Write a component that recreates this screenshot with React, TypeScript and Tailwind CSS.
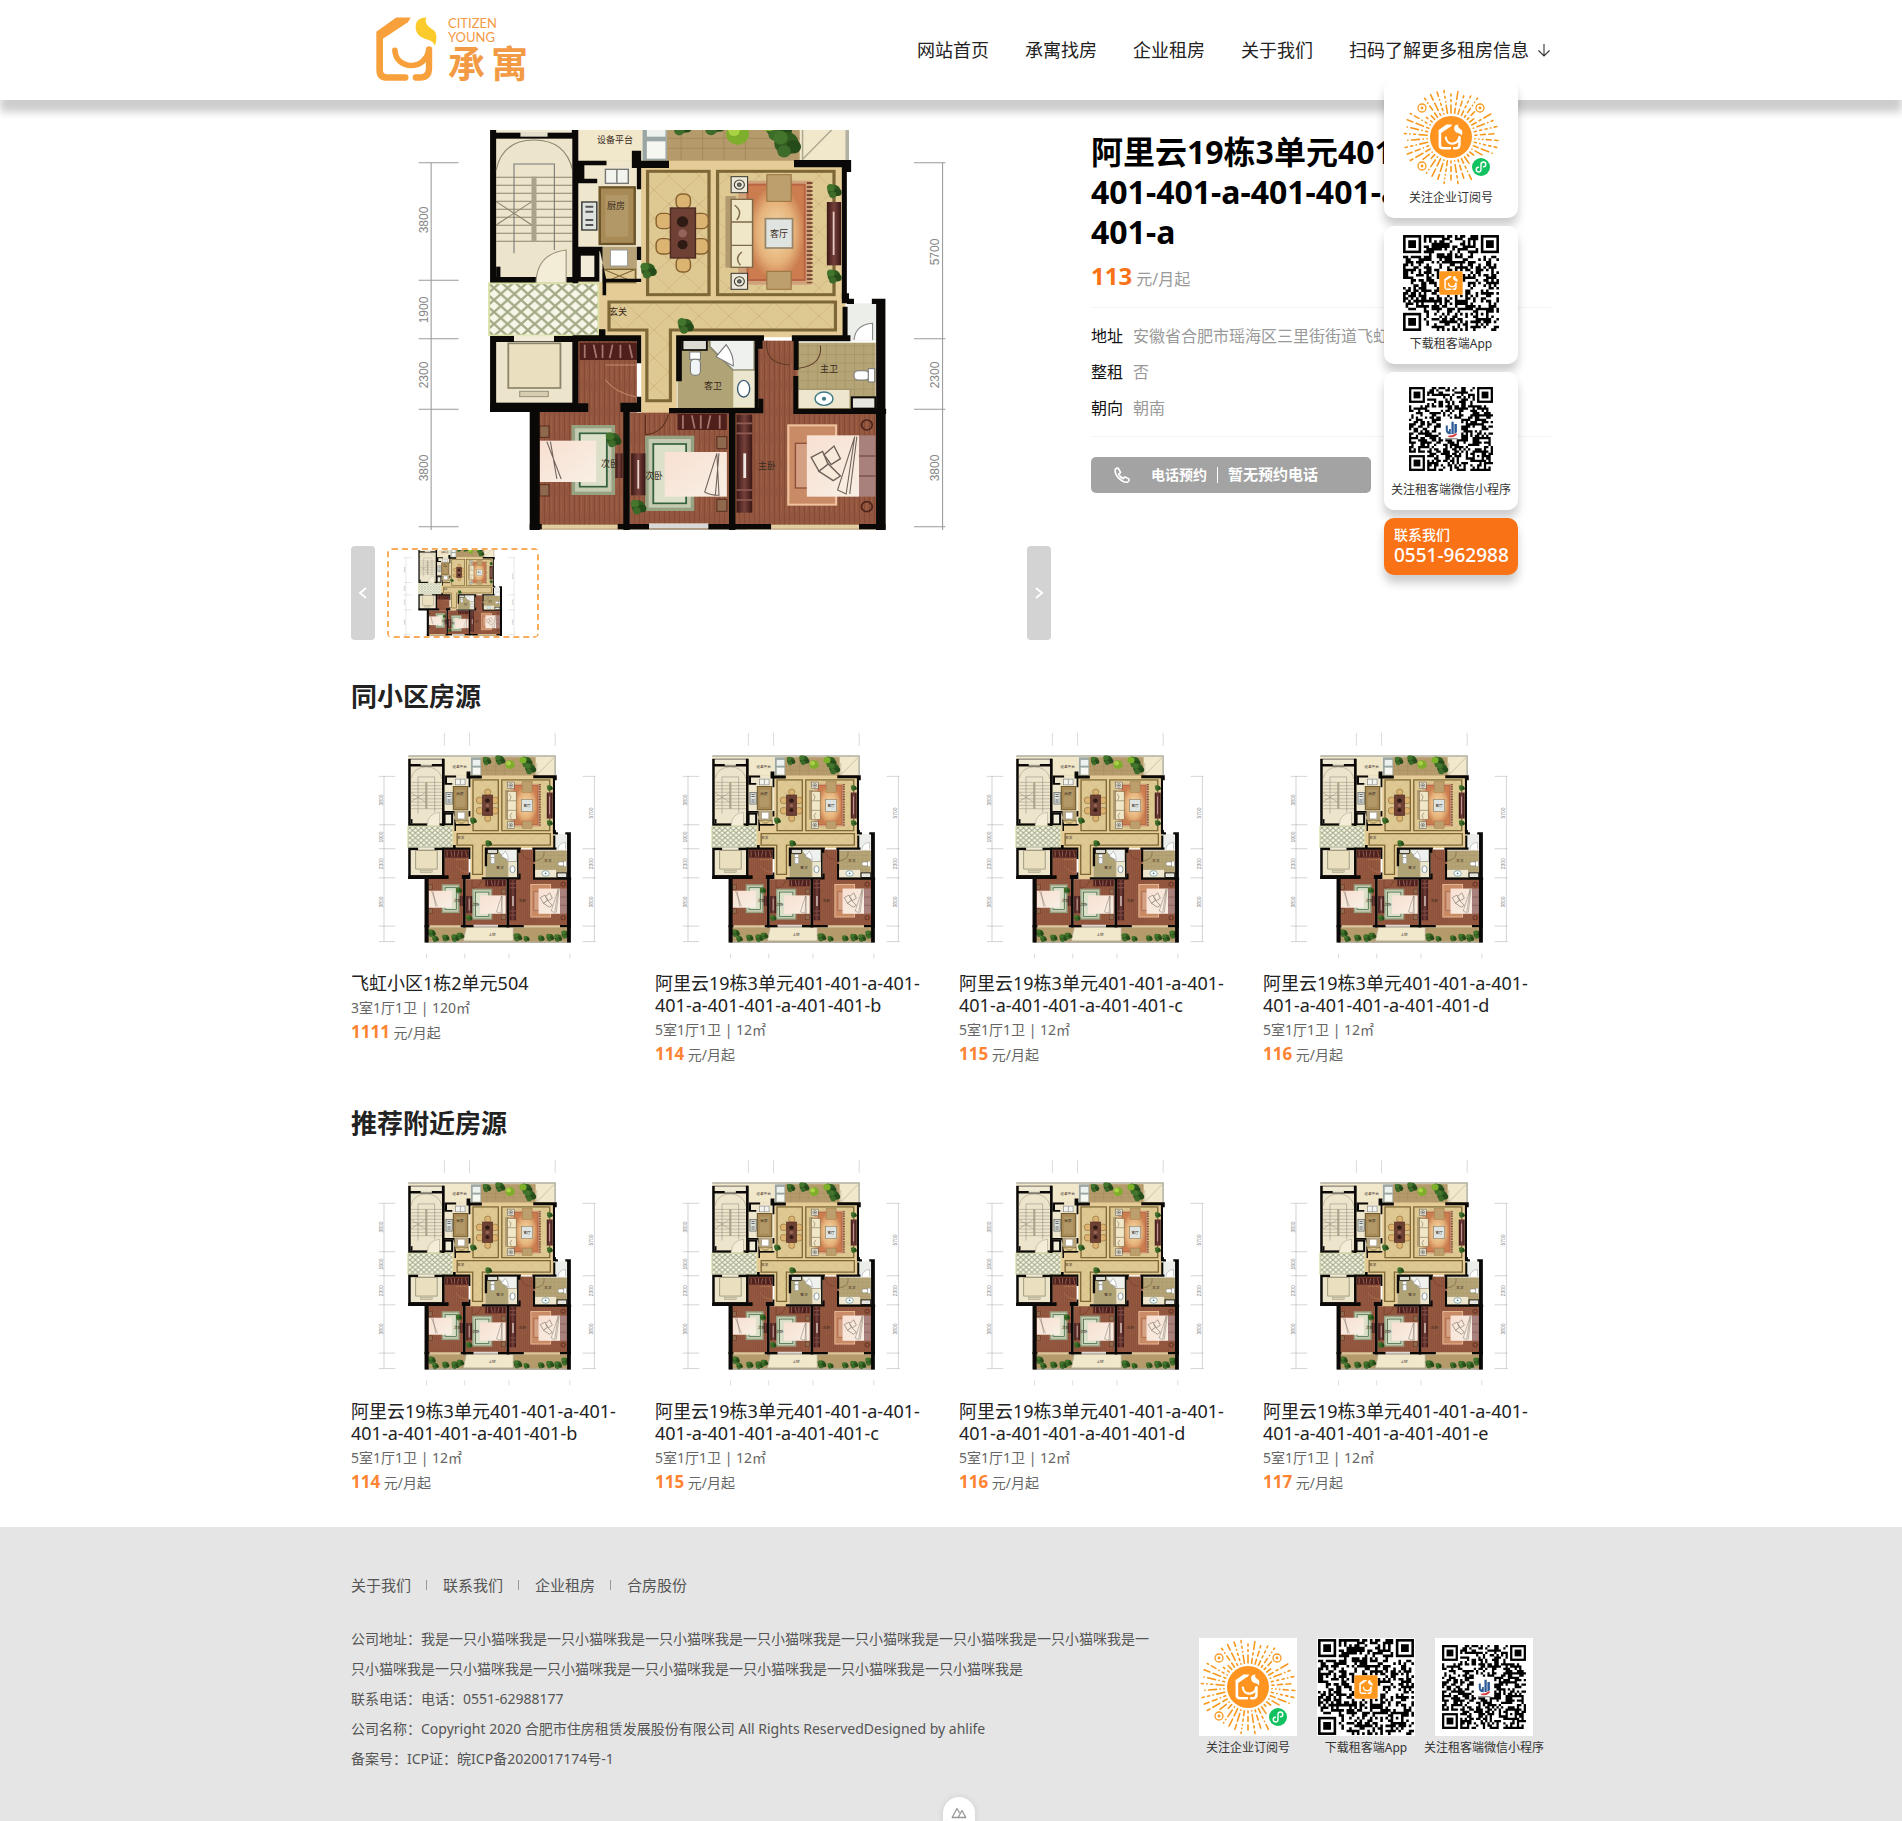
import React from "react";

const FONT =
  "font-['Noto_Sans','Noto_Sans_CJK_SC',sans-serif]";

/* ---------- brand mark ---------- */

function MarkPaths({ main, leaf }: { main: string; leaf: string }) {
  return (
    <>
      <g fill="none" stroke={main} strokeLinecap="round" strokeLinejoin="round">
        <path d="M122 104V212Q122 235 146 235H199" strokeWidth="20" />
        <path d="M168 153C172 214 260 214 270 153" strokeWidth="17" />
        <path d="M271 150V206Q271 235 243 235H231" strokeWidth="19" />
      </g>
      <path d="M111 98L172 54H216L207 68L132 118Z" fill={main} />
      <path
        d="M232 72C236 58 250 54 263 53C254 74 274 84 287 94C297 108 293 124 289 139C281 120 262 122 246 112C232 102 228 86 232 72Z"
        fill={leaf}
      />
    </>
  );
}

function Logo() {
  return (
    <a href="#" aria-label="承寓 Citizen Young" className="ml-6 flex items-start gap-2.5">
      <svg viewBox="108 50 190 198" className="h-[66px] w-[63px]" aria-hidden="true">
        <MarkPaths main="#f7a03c" leaf="#fbcb2c" />
      </svg>
      <span className="flex flex-col text-[#f39a44]">
        <span className="font-['Lato',sans-serif] text-[13px] leading-[14px]">
          CITIZEN
          <br />
          YOUNG
        </span>
        <span className="flex gap-1.5 text-[37px] leading-10 font-bold">
          <span>承</span>
          <span>寓</span>
        </span>
      </span>
    </a>
  );
}

/* ---------- codes ---------- */

function hash(x: number, y: number, seed: number) {
  let h = (x * 374761393 + y * 668265263 + seed * 1274126177) | 0;
  h = Math.imul(h ^ (h >>> 13), 1274126177);
  h ^= h >>> 16;
  return (h >>> 0) / 4294967296;
}

const N = 37;

function qrPath(seed: number) {
  let d = "";
  for (let y = 0; y < N; y++) {
    for (let x = 0; x < N; x++) {
      const inFinder = (x < 8 && y < 8) || (x > N - 9 && y < 8) || (x < 8 && y > N - 9);
      const inCentre = Math.abs(x - 18) < 5 && Math.abs(y - 18) < 5;
      if (inFinder || inCentre) continue;
      const ax = Math.max(Math.abs(x - 30), Math.abs(y - 30));
      const on = ax <= 2 ? ax !== 1 : hash(x, y, seed) > 0.48;
      if (on) d += `M${x} ${y}h1v1h-1z`;
    }
  }
  return d;
}

const QR_APP = qrPath(3);
const QR_MINI = qrPath(11);

function Finder({ x, y }: { x: number; y: number }) {
  return (
    <>
      <rect x={x + 0.5} y={y + 0.5} width="6" height="6" fill="none" stroke="#000" strokeWidth="1" />
      <rect x={x + 2} y={y + 2} width="3" height="3" />
    </>
  );
}

function QrBody({ d }: { d: string }) {
  return (
    <>
      <path d={d} />
      <Finder x={0} y={0} />
      <Finder x={30} y={0} />
      <Finder x={0} y={30} />
    </>
  );
}

function AppCode() {
  return (
    <svg viewBox="-0.4 -0.4 37.8 37.8" className="size-[98px] bg-white" role="img" aria-label="下载租客端App">
      <QrBody d={QR_APP} />
      <rect x="14" y="14" width="9" height="9" rx="0.6" fill="#ff981e" />
      <svg x="15.7" y="15.7" width="5.6" height="5.6" viewBox="108 50 190 198">
        <MarkPaths main="#fff" leaf="#fff" />
      </svg>
    </svg>
  );
}

function MiniCode() {
  return (
    <svg viewBox="-3.1 -3.1 43.2 43.2" className="size-[98px] bg-white" role="img" aria-label="关注租客端微信小程序">
      <QrBody d={QR_MINI} />
      <path
        d="M16.2 17v1.8q0 2 2.2 2V18.5h-.8v1h-.5V17zM18.7 15.3h1v5.4h-1zM20 16.3h1.1v3.6l-1.1 .7z"
        fill="#2b5a96"
      />
      <path d="M17 21.5q2.4 .1 3.8-1.2l.4 .6q-1.4 1.5-3.6 1.2z" fill="#d8413c" />
      <path d="M15.8 22.8h5.6" stroke="#888" strokeWidth=".5" />
    </svg>
  );
}

const RAY_COUNT = 42;
const RAYS = Array.from({ length: RAY_COUNT }, (_, i) => {
  const a = ((i + 0.5) / RAY_COUNT) * Math.PI * 2;
  const segs: string[] = [];
  const isMarker = (x: number, y: number) =>
    Math.hypot(x - 20, y - 20) < 6.5 ||
    Math.hypot(x - 78, y - 20) < 6.5 ||
    Math.hypot(x - 20, y - 78) < 6.5 ||
    Math.hypot(x - 79, y - 79) < 11.5;
  let r = 24;
  let k = 0;
  while (r < 46) {
    const len = [0.3, 2, 5, 8][Math.floor(hash(i, k, 5) * 4)];
    const e = Math.min(r + len, 47);
    const p = [r, e].map((q) => [49 + Math.cos(a) * q, 49 + Math.sin(a) * q]);
    if (!isMarker(p[0][0], p[0][1]) && !isMarker(p[1][0], p[1][1]))
      segs.push(`M${p[0][0].toFixed(1)} ${p[0][1].toFixed(1)}L${p[1][0].toFixed(1)} ${p[1][1].toFixed(1)}`);
    r = e + 3.5;
    k++;
  }
  return segs.join("");
}).join("");

function SunCode() {
  return (
    <svg viewBox="0 0 98 98" className="size-[98px] bg-white" role="img" aria-label="关注企业订阅号">
      <path d={RAYS} stroke="#f7991f" strokeWidth="1.6" strokeLinecap="round" />
      {[
        [20, 20],
        [78, 20],
        [20, 78],
      ].map(([x, y]) => (
        <g key={`${x}-${y}`}>
          <circle cx={x} cy={y} r="4" fill="none" stroke="#f7991f" strokeWidth="1.3" />
          <circle cx={x} cy={y} r="1.4" fill="#f7991f" />
        </g>
      ))}
      <circle cx="49" cy="49" r="21" fill="#ff9520" />
      <svg x="36" y="36" width="25" height="26" viewBox="108 50 190 198">
        <MarkPaths main="#fff" leaf="#fff" />
      </svg>
      <circle cx="79" cy="79" r="9" fill="#12c15f" />
      <path
        d="M76.5 79.2a2.4 2.4 0 1 0 2.5 2.6v-5.6a2.4 2.4 0 1 1 2.5 2.6"
        fill="none"
        stroke="#fff"
        strokeWidth="1.4"
        strokeLinecap="round"
      />
    </svg>
  );
}

const CODES = [
  { label: "关注企业订阅号", Code: SunCode },
  { label: "下载租客端App", Code: AppCode },
  { label: "关注租客端微信小程序", Code: MiniCode },
];

/* ---------- floor plan ---------- */

const WALL = "#0b0907";
const WOOD = "url(#fp-wood)";

function Bush({ x, y, r = 22 }: { x: number; y: number; r?: number }) {
  return (
    <g>
      <circle cx={x} cy={y} r={r} fill="#2f5a20" />
      <circle cx={x - r * 0.5} cy={y - r * 0.5} r={r * 0.6} fill="#44752c" />
      <circle cx={x + r * 0.6} cy={y + r * 0.3} r={r * 0.6} fill="#264b1a" />
      <circle cx={x - r * 0.2} cy={y + r * 0.7} r={r * 0.55} fill="#3d6b29" />
    </g>
  );
}

function Tick({ x, ys }: { x: number; ys: number[] }) {
  return (
    <g stroke="#9a9a9a" strokeWidth="3" fill="none">
      <path d={`M${x} ${ys[0]}V${ys[ys.length - 1]}`} />
      {ys.map((y) => (
        <path key={y} d={x < 500 ? `M${x - 35} ${y}h112` : `M${x - 80} ${y}h88`} />
      ))}
    </g>
  );
}

function Lamp({ x, y }: { x: number; y: number }) {
  return (
    <g stroke="#3a3a34" strokeWidth="3">
      <rect x={x - 23} y={y - 24} width="46" height="48" fill="#ece7d6" />
      <circle cx={x} cy={y} r="14" fill="none" />
      <circle cx={x} cy={y} r="5" fill="#777" />
    </g>
  );
}

function FloorPlanDefs() {
  return (
    <svg className="absolute size-0" aria-hidden="true">
      <defs>
        <pattern id="fp-wood" width="14" height="80" patternUnits="userSpaceOnUse">
          <rect width="14" height="80" fill="#93573f" />
          <path d="M0 0V80" stroke="#804630" strokeWidth="4" />
          <path d="M7 10V60" stroke="#9f6247" strokeWidth="2" />
        </pattern>
        <pattern id="fp-lattice" width="38" height="36" patternUnits="userSpaceOnUse">
          <rect width="38" height="36" fill="#f6f5e8" />
          <path d="M0 0L38 36M38 0L0 36" stroke="#a5ab87" strokeWidth="7" />
        </pattern>
        <pattern id="fp-tile" width="26" height="26" patternUnits="userSpaceOnUse">
          <rect width="26" height="26" fill="#b5a475" />
          <path d="M0 0H26M0 0V26" stroke="#9d8c60" strokeWidth="3" />
        </pattern>
        <pattern id="fp-marble" width="84" height="84" patternUnits="userSpaceOnUse">
          <rect width="84" height="84" fill="#dfc993" />
          <path d="M0 0L84 84M84 0L0 84" stroke="#c9ae74" strokeWidth="2" />
        </pattern>
        <radialGradient id="fp-rug">
          <stop offset="0" stopColor="#f6dcab" />
          <stop offset="0.65" stopColor="#e5b27a" />
          <stop offset="1" stopColor="#cb7d50" />
        </radialGradient>
        <linearGradient id="fp-bed" x1="0" y1="0" x2="1" y2="1">
          <stop offset="0" stopColor="#f8e0d2" />
          <stop offset="1" stopColor="#f8efe4" />
        </linearGradient>
        <linearGradient id="fp-dark" x1="0" y1="0" x2="1" y2="0">
          <stop offset="0" stopColor="#3a1715" />
          <stop offset="0.5" stopColor="#75403a" />
          <stop offset="1" stopColor="#3a1715" />
        </linearGradient>
      </defs>
      <symbol id="floor-plan" viewBox="0 0 700 560" preserveAspectRatio="xMidYMid slice">
        <rect width="700" height="560" fill="#fff" />
        <g transform="translate(48 70) scale(.35714 .33333)">
          <g stroke="#aaa" strokeWidth="3">
            <path d="M501-190v95M672-190v95M1255-190v95M380 1420v35M640 1420v35M940 1420v35M1355 1420v35" />
          </g>
          <Tick x={90} ys={[128, 481, 656, 868, 1220, 1333]} />
          <Tick x={1522} ys={[128, 656, 868, 1220, 1333]} />

          {/* upper balcony and service area */}
          <rect x="255" y="-22" width="1000" height="150" fill="#f1e8cc" />
          <path d="M255-20H1255V120" fill="none" stroke="#b3b0a4" strokeWidth="10" />
          <rect x="750" y="-12" width="372" height="140" fill="#b59b6c" />
          <path d="M750 55h372M750 85h372M790 10v110M850 10v110M910 10v110M970 10v110" stroke="#9c8257" strokeWidth="2" />
          <rect x="682" y="-10" width="68" height="135" fill="#9aa6a3" />
          <rect x="694" y="8" width="52" height="42" fill="#eef2ef" />
          <rect x="694" y="64" width="52" height="52" fill="#f7f7f1" />
          <path d="M1130 30V120M1130 118L1248-10" stroke="#aaa68f" strokeWidth="4" />
          <Bush x={790} y={14} r={26} />
          <Bush x={880} y={8} r={30} />
          <Bush x={1060} y={20} r={34} />
          <Bush x={1085} y={70} r={34} />
          <circle cx="948" cy="42" r="32" fill="#7fae2c" />
          <circle cx="1035" cy="10" r="24" fill="#7db12a" />
          <circle cx="938" cy="32" r="16" fill="#a9d244" />

          {/* stairs */}
          <rect x="255" y="0" width="246" height="490" fill={WALL} />
          <rect x="272" y="56" width="214" height="415" fill="#ece4cb" />
          <rect x="272" y="4" width="212" height="34" fill="#f0e9d3" />
          <rect x="340" y="36" width="76" height="14" fill="#e4dfca" />
          <g fill="none" stroke="#8a836c" strokeWidth="3">
            <path d="M272 150Q290 60 378 60T486 150" />
            <path d="M272 172H486M272 196H486M272 220H486M272 244H486M272 268H486M272 292H486M272 316H486M272 340H486M272 364H486" />
            <path d="M322 400V132H435V390" stroke="#777" />
            <path d="M272 245L372 315M272 315L372 245" />
          </g>
          <rect x="371" y="170" width="14" height="196" fill="#aaa38c" />
          <rect x="272" y="440" width="12" height="32" fill={WALL} />
          <path d="M384 490V480Q390 400 468 390V490Z" fill="#f3edd8" stroke="#999179" strokeWidth="3" />

          {/* living block floor */}
          <path d="M500 122H1250V652H778V880H678V652H500Z" fill="#e5cc97" />
          <rect x="500" y="122" width="178" height="365" fill="#eee6cd" />
          <path d="M570 380h96v108h-96z" fill="#b7a377" />
          <rect x="502" y="400" width="52" height="78" fill="#f1ecd8" stroke={WALL} strokeWidth="14" />
          <rect x="562" y="202" width="98" height="170" fill="#a78a55" stroke="#6d552a" strokeWidth="7" />
          <rect x="578" y="225" width="64" height="125" fill="#b29866" />
          <rect x="512" y="246" width="42" height="84" fill="#dfe3de" stroke="#333" strokeWidth="4" />
          <path d="M522 260h22M522 275h22M522 300h22M522 315h22" stroke="#555" strokeWidth="6" />
          <rect x="578" y="148" width="64" height="42" fill="#f4f4ef" stroke="#777" strokeWidth="4" />
          <path d="M610 150v38" stroke="#777" strokeWidth="4" />
          <rect x="592" y="390" width="48" height="48" fill="#fff" stroke="#999" strokeWidth="3" />
          <rect x="572" y="448" width="90" height="40" fill="#dfc892" stroke="#7b6434" strokeWidth="4" />
          <path d="M572 448l90 40M662 448l-90 40" stroke="#7b6434" strokeWidth="3" />

          <rect x="696" y="154" width="172" height="370" fill="url(#fp-marble)" stroke="#7d6736" strokeWidth="9" />
          <rect x="892" y="154" width="326" height="370" fill="url(#fp-marble)" stroke="#7d6736" strokeWidth="9" />
          <path
            d="M588 546H1222V630H760V842H694V630H588Z"
            fill="url(#fp-marble)"
            stroke="#7d6736"
            strokeWidth="9"
          />
          {/* dining set */}
          <g fill="#dcb472" stroke="#86602f" strokeWidth="4">
            <rect x="776" y="222" width="40" height="44" rx="16" />
            <rect x="776" y="412" width="40" height="44" rx="16" />
            <rect x="720" y="280" width="44" height="46" rx="16" />
            <rect x="720" y="356" width="44" height="46" rx="16" />
            <rect x="822" y="280" width="44" height="46" rx="16" />
            <rect x="822" y="356" width="44" height="46" rx="16" />
          </g>
          <rect x="760" y="264" width="70" height="150" fill="#6f4134" stroke="#4d2a21" strokeWidth="4" />
          <circle cx="794" cy="305" r="16" fill="#2d1b14" />
          <circle cx="794" cy="340" r="12" fill="#94645a" />
          <circle cx="794" cy="374" r="14" fill="#2d1b14" />
          {/* sitting group */}
          <rect x="950" y="182" width="204" height="312" fill="#cfa27c" />
          <path d="M1150 186V490" stroke="#7d4a36" strokeWidth="16" strokeDasharray="6 6" />
          <rect x="976" y="194" width="160" height="286" fill="url(#fp-rug)" stroke="#bb6444" strokeWidth="6" />
          <rect x="1030" y="164" width="68" height="80" fill="#bd9f6e" stroke="#97733f" strokeWidth="3" />
          <rect x="1030" y="454" width="68" height="54" fill="#bd9f6e" stroke="#97733f" strokeWidth="3" />
          <rect x="914" y="228" width="30" height="215" fill="#b29a70" />
          <rect x="930" y="238" width="60" height="204" fill="#f0e6c8" stroke="#7d6a48" strokeWidth="4" />
          <path d="M930 306h60M930 376h60M940 256q24 18 6 44M960 396q-22 18-4 40" stroke="#7d6a48" strokeWidth="4" fill="none" />
          <rect x="1026" y="296" width="76" height="88" fill="#dfe4e0" stroke="#97866a" strokeWidth="5" />
          <Lamp x={953} y={194} />
          <Lamp x={953} y={484} />
          <rect x="1198" y="246" width="40" height="190" fill="url(#fp-dark)" />
          <path d="M1217 275v130" stroke="#e3c7c0" strokeWidth="5" />
          <Bush x={1218} y={212} r={18} />
          <Bush x={1218} y={468} r={18} />
          <Bush x={698} y={450} r={20} />

          {/* lift lobby and lift */}
          <rect x="252" y="490" width="306" height="156" fill="url(#fp-lattice)" stroke="#dbe0a6" strokeWidth="5" />
          <rect x="255" y="648" width="246" height="228" fill={WALL} />
          <rect x="272" y="666" width="214" height="182" fill="#ece4cb" />
          <rect x="306" y="670" width="146" height="134" fill="#eadfbf" stroke="#8c846a" strokeWidth="5" />
          <rect x="338" y="814" width="80" height="16" fill="#d6ccb0" stroke="#999179" strokeWidth="3" />

          {/* hallway and lower rooms */}
          <rect x="500" y="656" width="166" height="222" fill={WOOD} />
          <rect x="390" y="876" width="240" height="350" fill={WOOD} />
          <rect x="645" y="878" width="280" height="348" fill={WOOD} />
          <rect x="1005" y="662" width="112" height="220" fill={WOOD} />
          <rect x="940" y="876" width="396" height="350" fill={WOOD} />
          <rect x="506" y="668" width="160" height="52" fill="#4e1f1b" />
          <path d="M520 674v40M545 674l8 40M570 674v40M598 674l-8 40M620 674v40M645 674l8 40" stroke="#a5776c" strokeWidth="5" />
          <path d="M578 735h85M578 780q30 40 85 50" fill="none" stroke="#c18a66" strokeWidth="3" />

          {/* guest bath */}
          <rect x="780" y="652" width="224" height="214" fill="#b0a376" />
          <path d="M870 660h125v90h-60l-65-70z" fill="#eef1ee" stroke="#8b8970" strokeWidth="5" />
          <path d="M888 710l28-36q22 30 20 64z" fill="#fff" stroke="#777" strokeWidth="3" />
          <rect x="936" y="752" width="60" height="110" fill="#ece6cf" />
          <ellipse cx="965" cy="806" rx="17" ry="25" fill="#fff" stroke="#3f5f78" strokeWidth="4" />
          <rect x="814" y="696" width="30" height="22" fill="#fff" stroke="#777" strokeWidth="3" />
          <rect x="816" y="718" width="28" height="48" rx="12" fill="#f0f4f6" stroke="#777" strokeWidth="3" />
          <rect x="794" y="660" width="68" height="30" fill="#dcdcd2" stroke={WALL} strokeWidth="5" />

          {/* master bath */}
          <rect x="1117" y="668" width="218" height="200" fill="url(#fp-tile)" />
          <rect x="1117" y="808" width="146" height="58" fill="#eee6ce" stroke="#9b8b60" strokeWidth="3" />
          <ellipse cx="1190" cy="836" rx="25" ry="20" fill="#fff" stroke="#3f7a83" strokeWidth="4" />
          <circle cx="1190" cy="836" r="6" fill="#3f7a83" />
          <rect x="1268" y="832" width="66" height="34" fill="#e6e6de" stroke={WALL} strokeWidth="6" />
          <rect x="1274" y="752" width="42" height="28" rx="12" fill="#fff" stroke="#777" strokeWidth="3" />
          <rect x="1314" y="746" width="18" height="40" fill="#fff" stroke="#777" strokeWidth="3" />
          <rect x="1255" y="550" width="80" height="112" fill="#eceee9" />
          <path d="M1274 660q4-46 52-50v50" fill="#fff" stroke="#888" strokeWidth="3" />
          <path d="M1030 662q-8 70 64 72M1120 745q66-10 60-68" fill="none" stroke="#5d3a28" strokeWidth="3" />

          {/* left bedroom */}
          <rect x="488" y="920" width="112" height="200" fill="#c5cbb0" stroke="#97a283" strokeWidth="10" />
          <rect x="506" y="940" width="76" height="160" fill="#dce0c9" stroke="#33603d" strokeWidth="5" />
          <rect x="394" y="962" width="158" height="124" fill="url(#fp-bed)" />
          <path d="M414 965l40 112M424 965l18 112" stroke="#6f625a" strokeWidth="3" />
          <rect x="394" y="918" width="26" height="34" fill="#8e694e" stroke="#5a2e22" strokeWidth="3" />
          <rect x="394" y="1094" width="26" height="34" fill="#8e694e" stroke="#5a2e22" strokeWidth="3" />
          <rect x="606" y="1000" width="20" height="74" fill="url(#fp-dark)" />
          <Bush x={600} y={958} r={19} />

          {/* middle bedroom */}
          <rect x="694" y="952" width="128" height="216" fill="#c5cbb0" stroke="#97a283" strokeWidth="10" />
          <rect x="712" y="972" width="92" height="178" fill="#dce0c9" stroke="#33603d" strokeWidth="5" />
          <rect x="744" y="996" width="174" height="134" fill="url(#fp-bed)" />
          <path d="M890 1000l-34 116q16 10 40 10zM896 1000l-10 124" fill="none" stroke="#6f625a" strokeWidth="3" />
          <rect x="650" y="1000" width="40" height="126" fill="url(#fp-dark)" />
          <path d="M670 1020v86" stroke="#e8d6cf" strokeWidth="5" />
          <rect x="780" y="882" width="138" height="48" fill="#4e1f1b" />
          <path d="M795 886v40M820 886l8 40M845 886v40M872 886l-8 40M898 886v40" stroke="#a5776c" strokeWidth="5" />
          <rect x="890" y="950" width="28" height="36" fill="#8e694e" stroke="#5a2e22" strokeWidth="3" />
          <rect x="890" y="1138" width="28" height="36" fill="#8e694e" stroke="#5a2e22" strokeWidth="3" />
          <path d="M690 884v60q50-4 64-60" fill="none" stroke="#5d2e1f" strokeWidth="3" />
          <Bush x={670} y={1160} r={19} />

          {/* master bedroom */}
          <rect x="945" y="884" width="44" height="294" fill="url(#fp-dark)" />
          <path d="M945 910h44M945 940h44M945 1110h44M945 1140h44" stroke="#8f5d54" strokeWidth="5" />
          <path d="M968 1000v74" stroke="#f0e4df" strokeWidth="8" />
          <rect x="1090" y="916" width="134" height="238" fill="#c98b66" stroke="#f0c39e" strokeWidth="6" />
          <rect x="1110" y="970" width="60" height="134" fill="#d4a083" stroke="#8f5137" strokeWidth="4" />
          <rect x="1142" y="946" width="146" height="184" fill="url(#fp-bed)" />
          <rect x="1288" y="946" width="46" height="184" fill="#a8807c" />
          <path d="M1288 1008h46M1288 1068h46" stroke="#7c534e" strokeWidth="4" />
          <g fill="#f7eadb" stroke="#6f625a" strokeWidth="4">
            <path d="M1154 1012l32-18 16 40-26 20z" />
            <path d="M1190 1004l28-26 18 38-26 18z" />
            <path d="M1176 1054l26-22 34 36-20 14z" />
          </g>
          <path d="M1276 950l-48 160 24 12zM1282 950l-20 172" fill="none" stroke="#6f625a" strokeWidth="3" />
          <circle cx="1310" cy="915" r="15" fill="none" stroke="#4d231b" strokeWidth="5" />
          <circle cx="1310" cy="1160" r="15" fill="none" stroke="#4d231b" strokeWidth="5" />

          {/* lower balconies */}
          <rect x="378" y="1228" width="976" height="108" fill="#b59b6c" />
          <path d="M650 1228h320v100H630z" fill="#f1e8cc" stroke="#aaa68f" strokeWidth="5" />
          <path d="M372 1338H1360" stroke="#b3b0a4" strokeWidth="10" />
          <Bush x={415} y={1270} r={24} />
          <Bush x={440} y={1312} r={20} />
          <Bush x={510} y={1305} r={22} />
          <Bush x={575} y={1306} r={24} />
          <Bush x={610} y={1290} r={22} />
          <Bush x={1000} y={1300} r={26} />
          <Bush x={1060} y={1312} r={18} />
          <Bush x={1160} y={1308} r={20} />
          <Bush x={1220} y={1302} r={24} />
          <Bush x={1275} y={1306} r={24} />
          <Bush x={1325} y={1280} r={26} />

          {/* walls */}
          <g fill={WALL}>
            <path d="M501 122h80v14h-62v40h36v14h-54zM652 92h26v30h78v22h-78v64h-12v-64h-14zM1106 120h160v36h-12v382h-14V142h-134z" />
            <path d="M486 0h16v490h-16zM560 380h10v146h10v-40h98v-10h-98zM666 380h12v40h-12zM500 380h70v14h-70z" />
            <path d="M1240 520h20v30h-20zM1254 536h20v16h-20zM1324 536h38v694h-26V552h-12zM1242 560h14v100h-14zM1100 646h164v18h-145v86h-14v-86h-5zM560 628h18v30h-18z" />
            <path d="M486 646h192v84h-12v-66H486zM486 648h16v222h-16zM776 646h246v16h-230v122h-16zM996 646h10v220h-10zM1004 660h14v26h-14z" />
            <path d="M500 850h30v24h-30zM620 848h58v28h-58zM255 852h275v24H255zM366 870h28v470h-28zM628 870h18v360h-18zM924 870h18v360h-18zM666 830h12v30h-12z" />
            <path d="M756 864h264v16H756zM1104 768h14v100h-14zM1104 866h260v16h-260zM1006 836h14v36h-14zM1336 870h26v470h-26z" />
            <path d="M366 1212h34v16h-34zM612 1212h88v16h-88zM866 1212h176v16H866zM1288 1212h74v16h-74z" />
          </g>
          <rect x="322" y="646" width="112" height="18" fill="#f1ead4" />
          <g fill="#e0cda0">
            <rect x="400" y="1214" width="212" height="12" />
            <rect x="1042" y="1214" width="246" height="12" />
          </g>
          <rect x="700" y="1210" width="166" height="14" fill="#d9d9d6" />
          <Bush x={802} y={616} r={20} />
        </g>
        <g fill="#858585" fontSize="12" textAnchor="middle" fontFamily="'Liberation Sans', sans-serif">
          {[
            [77, 170, "3800"],
            [77, 260, "1900"],
            [77, 325, "2300"],
            [77, 418, "3800"],
            [588, 202, "5700"],
            [588, 325, "2300"],
            [588, 418, "3800"],
          ].map(([x, y, t]) => (
            <text key={`${x}-${y}`} transform={`translate(${x} ${y}) rotate(-90)`}>
              {t}
            </text>
          ))}
        </g>
        <g fill="#3a2a1c" fontSize="9" textAnchor="middle" fontFamily="'Noto Sans CJK SC', sans-serif">
          <text x="264" y="93">设备平台</text>
          <text x="265" y="159">厨房</text>
          <text x="428" y="187">客厅</text>
          <text x="267" y="265">玄关</text>
          <text x="362" y="339">客卫</text>
          <text x="478" y="322">主卫</text>
          <text x="416" y="419">主卧</text>
          <text x="259" y="417">次卧</text>
          <text x="303" y="429">次卧</text>
          <text x="343" y="501">上空</text>
        </g>
      </symbol>
    </svg>
  );
}

function FloorPlan({ className }: { className: string }) {
  return (
    <svg className={className} role="img" aria-label="户型图">
      <use href="#floor-plan" width="100%" height="100%" />
    </svg>
  );
}

/* ---------- header ---------- */

const NAV = ["网站首页", "承寓找房", "企业租房", "关于我们"];

function DownArrow() {
  return (
    <svg viewBox="0 0 14 16" className="h-4 w-3.5" fill="none" stroke="#333" strokeWidth="1.1" aria-hidden="true">
      <path d="M7 2V14M1.5 8.5L7 14L12.5 8.5" />
    </svg>
  );
}

function ContactPanel() {
  return (
    <aside className="absolute top-20 right-[33px] z-20 flex w-[134px] flex-col gap-2 text-[#333]">
      {CODES.map(({ label, Code }) => (
        <figure
          key={label}
          className="flex flex-col items-center rounded-[10px] bg-white py-2 shadow-[0_8px_10px_rgba(0,0,0,0.2)]"
        >
          <Code />
          <figcaption className="text-xs leading-6 whitespace-nowrap">{label}</figcaption>
        </figure>
      ))}
      <div className="rounded-[10px] bg-[#fa7216] px-2.5 pt-1.5 pb-2.5 whitespace-nowrap text-white shadow-[0_8px_10px_rgba(0,0,0,0.2)]">
        <p className="text-sm leading-[22px] font-medium">联系我们</p>
        <p className="text-[19px] leading-[19px] font-medium">0551-962988</p>
      </div>
    </aside>
  );
}

function Header() {
  return (
    <header className="relative z-10 bg-white shadow-[0_12px_8px_rgba(0,0,0,0.2)]">
      <div className="relative mx-auto flex h-[100px] max-w-[1200px] items-center justify-between">
        <Logo />
        <nav className="flex items-center gap-9 text-lg text-[#222]">
          {NAV.map((n) => (
            <a key={n} href="#">
              {n}
            </a>
          ))}
          <button type="button" className="flex items-center gap-2">
            扫码了解更多租房信息
            <DownArrow />
          </button>
        </nav>
        <ContactPanel />
      </div>
    </header>
  );
}

/* ---------- detail ---------- */

function ArrowButton({ label, d }: { label: string; d: string }) {
  return (
    <button
      type="button"
      aria-label={label}
      className="flex w-6 items-center justify-center rounded-[4px] bg-[#d3d3d3]"
    >
      <svg viewBox="0 0 12 14" className="h-3.5 w-3" fill="none" stroke="#fff" strokeWidth="2" aria-hidden="true">
        <path d={d} />
      </svg>
    </button>
  );
}

function Gallery() {
  return (
    <div className="w-[700px] shrink-0">
      <FloorPlan className="block h-[400px] w-full" />
      <div className="mt-4 flex h-[94px] gap-3">
        <ArrowButton label="上一张" d="M9 2L3 7L9 12" />
        <div className="flex flex-1 items-center">
          <button type="button" className="rounded-[5px] border-2 border-dashed border-[#f8ac5c]">
            <FloorPlan className="block h-[86px] w-[148px]" />
          </button>
        </div>
        <ArrowButton label="下一张" d="M3 2L9 7L3 12" />
      </div>
    </div>
  );
}

const FACTS = [
  ["地址", "安徽省合肥市瑶海区三里街街道飞虹小区"],
  ["整租", "否"],
  ["朝向", "朝南"],
];

function Detail() {
  return (
    <div className="min-w-0 flex-1 pt-0.5">
      <h1 className="pr-6 text-[32px] leading-10 font-bold text-black">
        阿里云19栋3单元401-401-a-401-401-a-401-401-a-401-401-a
      </h1>
      <p className="mt-2 leading-9 text-[#999]">
        <span className="text-2xl font-bold text-[#fa7216]">113</span> 元/月起
      </p>
      <dl className="mt-2.5 border-y border-[#f3f3f3] py-2.5 leading-9">
        {FACTS.map(([k, v]) => (
          <div key={k} className="flex gap-2.5">
            <dt className="text-[#111]">{k}</dt>
            <dd className="text-[#999]">{v}</dd>
          </div>
        ))}
      </dl>
      <button
        type="button"
        className="mt-5 flex h-9 w-[280px] items-center rounded-[5px] bg-[#a3a3a3] pl-[22px] text-sm font-bold text-white"
      >
        <svg viewBox="0 0 24 24" className="mr-5 size-[18px]" fill="none" stroke="#fff" strokeWidth="2.2" strokeLinejoin="round" aria-hidden="true">
          <path d="M3 4.5Q5 2.5 7 3L10 8.5L7.5 11Q10 15 13.5 16.8L16 14.5L21.5 17.5Q22 20 19.5 21.5Q14 22.5 8 16.5T3 4.5Z" />
        </svg>
        <span>电话预约</span>
        <span className="mx-2.5 h-4 w-px bg-white" />
        <span className="text-[15px]">暂无预约电话</span>
      </button>
    </div>
  );
}

/* ---------- listings ---------- */

type Listing = { title: string; meta: string; price: number };

const PREFIX = "阿里云19栋3单元401-401-a-401-401-a-401-401-a-401-401-";
const unit = (letter: string, price: number): Listing => ({
  title: PREFIX + letter,
  meta: "5室1厅1卫 | 12㎡",
  price,
});

const SAME: Listing[] = [
  { title: "飞虹小区1栋2单元504", meta: "3室1厅1卫 | 120㎡", price: 1111 },
  unit("b", 114),
  unit("c", 115),
  unit("d", 116),
];
const NEARBY: Listing[] = [unit("b", 114), unit("c", 115), unit("d", 116), unit("e", 117)];

function Listings({ heading, items }: { heading: string; items: Listing[] }) {
  return (
    <section>
      <h2 className="mt-[38px] mb-4 text-[26px] leading-9 font-bold text-[#222]">{heading}</h2>
      <div className="grid grid-cols-4 gap-4">
        {items.map((it) => (
          <a key={it.title} href="#" className="block">
            <FloorPlan className="block aspect-[5/4] w-full" />
            <h3 className="mt-3 text-lg leading-[22px] text-[#222]">{it.title}</h3>
            <p className="mt-0.5 text-sm leading-6 text-[#666]">{it.meta}</p>
            <p className="text-sm leading-6 text-[#666]">
              <span className="text-[17px] leading-6 font-bold text-[#ff8432]">{it.price}</span> 元/月起
            </p>
          </a>
        ))}
      </div>
    </section>
  );
}

/* ---------- footer ---------- */

const LINKS = ["关于我们", "联系我们", "企业租房", "合房股份"];
const ADDRESS = "我是一只小猫咪".repeat(14) + "我是";

function Footer() {
  return (
    <footer className="flex-1 bg-[#e5e5e5] text-[#555]">
      <div className="mx-auto max-w-[1200px] pt-[47px] pb-[47px]">
        <ul className="flex items-center text-[15px] leading-[22px]">
          {LINKS.map((l, i) => (
            <li key={l} className="flex items-center">
              {i > 0 && <span className="mr-4 ml-[15px] h-2.5 w-px bg-[#999]" />}
              <a href="#">{l}</a>
            </li>
          ))}
        </ul>
        <div className="mt-7 flex justify-between">
          <address className="w-[800px] text-sm leading-[30px] not-italic">
            <p className="break-all">公司地址：{ADDRESS}</p>
            <p>联系电话：电话：0551-62988177</p>
            <p>公司名称：Copyright 2020 合肥市住房租赁发展股份有限公司 All Rights ReservedDesigned by ahlife</p>
            <p>备案号：ICP证：皖ICP备2020017174号-1</p>
          </address>
          <div className="mt-3.5 mr-2 flex text-[#333]">
            {CODES.map(({ label, Code }) => (
              <figure key={label} className="flex w-[118px] flex-col items-center">
                <Code />
                <figcaption className="text-xs leading-6 whitespace-nowrap">{label}</figcaption>
              </figure>
            ))}
          </div>
        </div>
      </div>
    </footer>
  );
}

export default function App() {
  return (
    <div className={`${FONT} relative flex min-h-screen flex-col overflow-hidden bg-white text-base`}>
      <FloorPlanDefs />
      <Header />
      <main className="mx-auto w-full max-w-[1200px] pt-[30px] pb-8">
        <div className="flex gap-10">
          <Gallery />
          <Detail />
        </div>
        <Listings heading="同小区房源" items={SAME} />
        <Listings heading="推荐附近房源" items={NEARBY} />
      </main>
      <Footer />
      <button
        type="button"
        aria-label="开发工具"
        className="absolute -bottom-2 left-1/2 -ml-2 flex h-8 w-8 justify-center rounded-t-full bg-white pt-2.5 shadow-[0_0_6px_rgba(0,0,0,0.1)]"
      >
        <svg viewBox="0 0 16 12" className="h-3 w-4" fill="none" stroke="#999" strokeWidth="1.3" strokeLinejoin="round" aria-hidden="true">
          <path d="M8.5 10.5H1.2L6 1.5L8.5 6M8.5 10.5H14.8L11 3.5L7 10.5" />
        </svg>
      </button>
    </div>
  );
}
